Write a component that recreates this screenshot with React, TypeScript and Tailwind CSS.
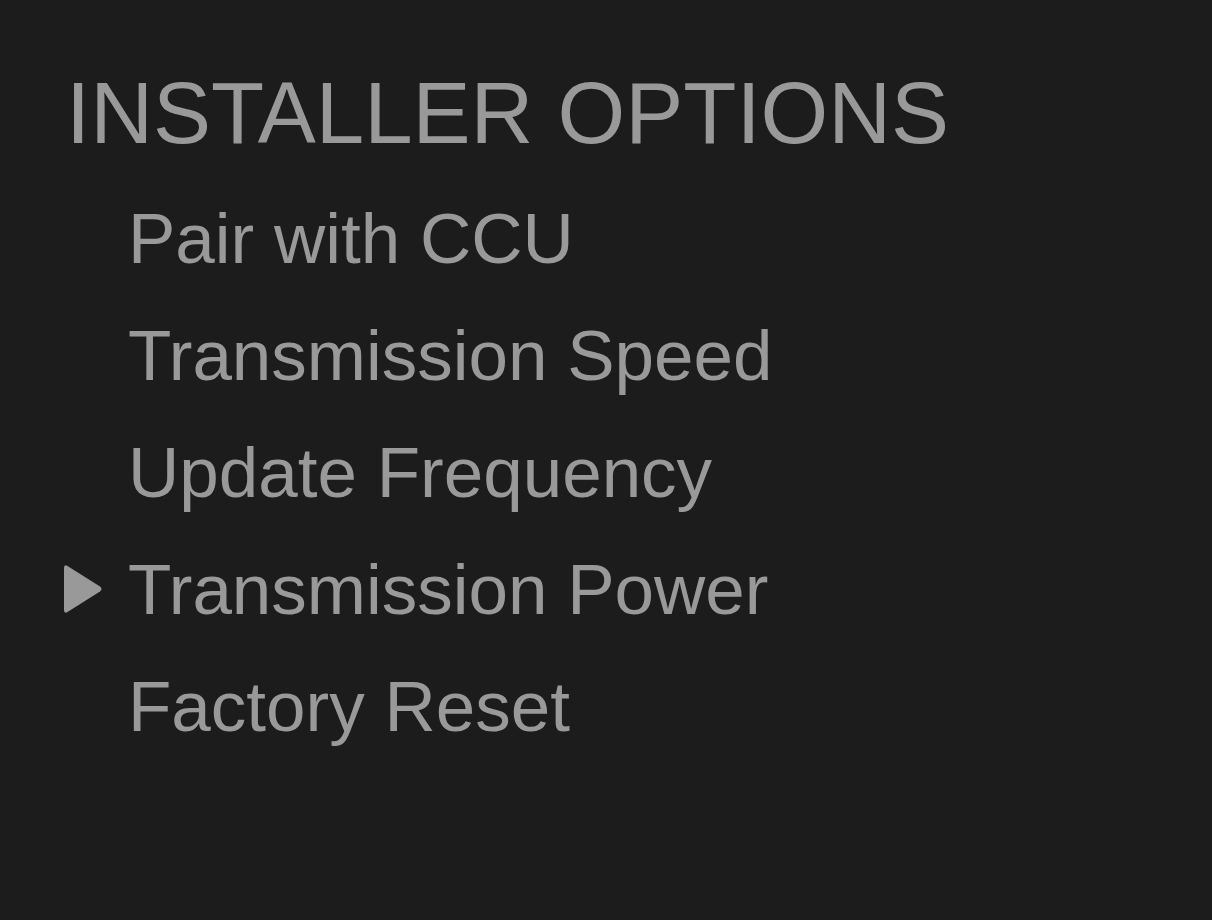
const items = [
  "Pair with CCU",
  "Transmission Speed",
  "Update Frequency",
  "Transmission Power",
  "Factory Reset",
];

const selected = 3;

export default function App() {
  return (
    <main className="min-h-screen w-full bg-[#1c1c1c] text-[#999999] font-['Liberation_Sans',Arial,sans-serif] pt-[69px] pl-[66px]">
      <h1 className="text-[87px] leading-[87px]">INSTALLER OPTIONS</h1>

      <ul className="mt-[24px]">
        {items.map((label, i) => (
          <li key={label} className="flex items-center h-[117px]">
            <div className="w-[62px] flex items-center">
              {i === selected && (
                <svg width="42" height="52" viewBox="0 0 42 52" className="-ml-[5px] -mt-[2px]">
                  <path
                    d="M3 5 Q3 1 6.5 3 L39 23.5 Q42 26 39 28.5 L6.5 49 Q3 51 3 47 Z"
                    fill="#999999"
                  />
                </svg>
              )}
            </div>
            <span className="text-[71px] leading-[117px]">{label}</span>
          </li>
        ))}
      </ul>
    </main>
  );
}
